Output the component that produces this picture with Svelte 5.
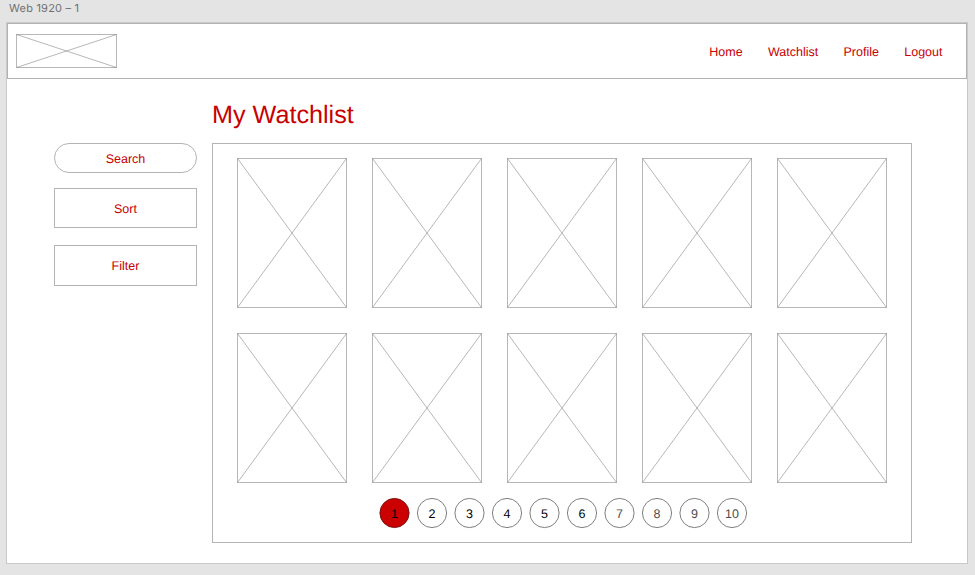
<script>
  const links = ['Home', 'Watchlist', 'Profile', 'Logout'];
  const posters = Array.from({ length: 10 }, (_, i) => i);
  const pages = Array.from({ length: 10 }, (_, i) => i + 1);
</script>

{#snippet placeholder(w, h)}
  <svg width={w} height={h} viewBox="0 0 {w} {h}" fill="none" stroke="#707070" stroke-opacity="0.5">
    <rect x="0.5" y="0.5" width={w - 1} height={h - 1} />
    <path d="M0.5 0.5L{w - 0.5} {h - 0.5}M{w - 0.5} 0.5L0.5 {h - 0.5}" />
  </svg>
{/snippet}

<div class="canvas">
  <div class="label">Web 1920 – 1</div>
  <div class="artboard">
    <header>
      {@render placeholder(101, 34)}
      <nav>
        {#each links as link}
          <a href="#top">{link}</a>
        {/each}
      </nav>
    </header>
    <div class="body">
      <aside>
        <button class="search">Search</button>
        <button class="sort">Sort</button>
        <button class="filter">Filter</button>
      </aside>
      <main>
        <h1>My Watchlist</h1>
        <section>
          <div class="grid">
            {#each posters as poster (poster)}
              {@render placeholder(110, 150)}
            {/each}
          </div>
          <div class="pager">
            {#each pages as page}
              <div class="page" class:active={page === 1} class:dim={page > 6}>
                <svg width="30" height="30" viewBox="0 0 30 30"><circle cx={page % 2 ? 14.5 : 15} cy="15" r="14.6" /></svg>
                <span>{page}</span>
              </div>
            {/each}
          </div>
        </section>
      </main>
    </div>
  </div>
</div>

<style>
  .canvas {
    box-sizing: border-box;
    width: 975px;
    height: 575px;
    padding-left: 6px;
    background: #e4e4e4;
    overflow: hidden;
    font-family: "Liberation Sans", Arial, sans-serif;
    font-size: 12.5px;
    text-rendering: geometricPrecision;
    color: #c80000;
  }
  .label {
    height: 22px;
    padding-left: 3px;
    box-sizing: border-box;
    font: 11px/16px Inter, sans-serif;
    letter-spacing: 0.22px;
    color: #707070;
  }
  .artboard {
    box-sizing: border-box;
    width: 962px;
    height: 542px;
    border: 1px solid #c9c9c9;
    background: #fff;
  }
  svg {
    display: block;
    flex: none;
    overflow: visible;
  }
  header {
    box-sizing: border-box;
    height: 56px;
    display: flex;
    justify-content: space-between;
    align-items: center;
    padding: 0 23.5px 0 8px;
    border: 1px solid #b2b2b2;
  }
  nav {
    display: flex;
    gap: 25.3px;
    padding-top: 2px;
  }
  nav a {
    color: inherit;
    text-decoration: none;
    line-height: 16px;
  }
  .body {
    display: flex;
    padding-left: 47px;
    gap: 15px;
  }
  aside {
    width: 143px;
    padding-top: 64px;
    display: flex;
    flex-direction: column;
  }
  button {
    box-sizing: border-box;
    width: 143px;
    height: 40px;
    padding: 1px 0 0;
    border: 1px solid #b4b4b4;
    background: #fff;
    color: inherit;
    font: inherit;
    text-rendering: inherit;
  }
  .search {
    height: 30px;
    border-radius: 15px;
  }
  .sort {
    margin-top: 15px;
  }
  .filter {
    margin-top: 17px;
    height: 41px;
    padding: 0;
  }
  h1 {
    margin: 0;
    height: 64px;
    padding-top: 21px;
    box-sizing: border-box;
    font-size: 25.2px;
    font-weight: 400;
    line-height: 30px;
  }
  section {
    box-sizing: border-box;
    width: 700px;
    height: 400px;
    padding: 14px 24px;
    border: 1px solid #b4b4b4;
  }
  .grid {
    display: grid;
    grid-template-columns: repeat(5, 110px);
    gap: 25px;
  }
  .pager {
    display: flex;
    gap: 7.5px;
    margin: 15px 0 0 142.5px;
  }
  .page {
    position: relative;
    width: 30px;
    height: 30px;
    text-align: center;
    line-height: 32px;
    color: #000;
  }
  .page svg {
    position: absolute;
    inset: 0;
    fill: #fff;
    stroke: #707070;
    stroke-width: 0.9px;
  }
  .page span {
    position: relative;
  }
  .active svg {
    fill: #cb0000;
    stroke: #701010;
  }
  .dim {
    color: #4d4d4d;
  }
</style>
